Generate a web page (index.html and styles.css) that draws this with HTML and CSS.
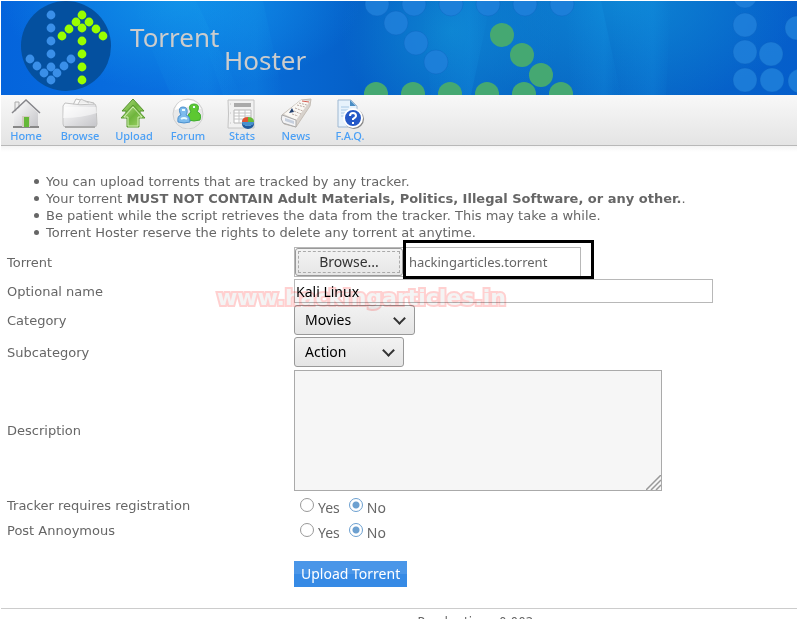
FILE: index.html
```html
<!DOCTYPE html>
<html lang="en">
<head>
    <meta charset="UTF-8">
    <meta name="viewport" content="width=device-width, initial-scale=1.0">
    <title>Torrent Hoster - Upload</title>
    <link rel="stylesheet" href="styles.css">
</head>
<body>
    <header class="banner">
        <svg class="dots" width="797" height="94" viewBox="0 0 797 94" aria-hidden="true">
            <defs>
                <linearGradient id="ray" x1="0" y1="0" x2="1" y2="0">
                    <stop offset="0" stop-color="#18a0ec" stop-opacity="0"/>
                    <stop offset=".7" stop-color="#18a0ec" stop-opacity=".2"/>
                    <stop offset="1" stop-color="#18a0ec" stop-opacity="0"/>
                </linearGradient>
            </defs>
            <g fill="url(#ray)">
                <path d="M130 0h65l45 94h-70z"/>
                <path d="M190 0h72l20 94h-60z"/>
                <path d="M420 0h70l-20 94h-40z"/>
                <path d="M565 0h35l20 94h-50z"/>
                <path d="M610 0h60l-5 94h-50z"/>
            </g>
            <g fill="#2080da" fill-opacity=".85" stroke="#0a5cb8" stroke-opacity=".3">
                <circle cx="376" cy="3" r="12"/><circle cx="413" cy="3" r="12"/><circle cx="450" cy="3" r="12"/>
                <circle cx="487" cy="3" r="12"/><circle cx="524" cy="3" r="12"/><circle cx="561" cy="3" r="12"/>
                <circle cx="395" cy="22" r="12"/><circle cx="415" cy="42" r="12"/><circle cx="435" cy="61" r="12"/>
                <circle cx="744" cy="-5" r="12"/><circle cx="744" cy="24" r="12"/><circle cx="744" cy="51" r="12"/>
                <circle cx="744" cy="79" r="12"/><circle cx="770" cy="53" r="12"/><circle cx="771" cy="79" r="12"/>
                <circle cx="796" cy="27" r="12"/><circle cx="799" cy="80" r="12"/>
            </g>
            <g fill="#45a872">
                <circle cx="375" cy="93" r="12"/><circle cx="412" cy="93" r="12"/><circle cx="449" cy="93" r="12"/>
                <circle cx="486" cy="93" r="12"/><circle cx="523" cy="93" r="12"/><circle cx="560" cy="93" r="12"/>
                <circle cx="501" cy="34" r="12"/><circle cx="521" cy="54" r="12"/><circle cx="540" cy="74" r="12"/>
            </g>
        </svg>
        <a href="#" class="brand" aria-label="Torrent Hoster">
            <svg class="logo" width="90" height="90" viewBox="0 0 90 90" aria-hidden="true">
                <circle cx="45" cy="45" r="45" fill="#04509f"/>
                <g fill="#3a8fe8">
                    <circle cx="30" cy="14" r="4.400"/><circle cx="30" cy="27" r="4.400"/><circle cx="30" cy="40" r="4.400"/>
                    <circle cx="30" cy="53" r="4.400"/><circle cx="30" cy="66" r="4.400"/><circle cx="30" cy="79" r="4.400"/>
                    <circle cx="9" cy="58" r="4.400"/><circle cx="16" cy="65" r="4.400"/><circle cx="23" cy="72" r="4.400"/>
                    <circle cx="36" cy="72" r="4.400"/><circle cx="43" cy="65" r="4.400"/><circle cx="50" cy="58" r="4.400"/>
                </g>
                <g fill="#9f0">
                    <circle cx="61" cy="14" r="4.400"/><circle cx="61" cy="27" r="4.400"/><circle cx="61" cy="40" r="4.400"/>
                    <circle cx="61" cy="53" r="4.400"/><circle cx="61" cy="66" r="4.400"/><circle cx="61" cy="79" r="4.400"/>
                    <circle cx="41" cy="35" r="4.400"/><circle cx="48" cy="28" r="4.400"/><circle cx="55" cy="21" r="4.400"/>
                    <circle cx="68" cy="21" r="4.400"/><circle cx="75" cy="28" r="4.400"/><circle cx="82" cy="35" r="4.400"/>
                </g>
            </svg>
            <span class="brand-name">Torrent <span class="second">Hoster</span></span>
        </a>
    </header>

    <nav class="menu">
        <a href="#">
            <svg width="40" height="34" viewBox="0 0 40 34">
                <defs>
                    <linearGradient id="grey" x1="0" y1="0" x2="1" y2="1"><stop offset="0" stop-color="#fff"/><stop offset="1" stop-color="#c4c4c8"/></linearGradient>
                    <linearGradient id="green" x1="0" y1="0" x2="1" y2="1"><stop offset="0" stop-color="#b9e08a"/><stop offset=".5" stop-color="#6fb53c"/><stop offset="1" stop-color="#a5d86f"/></linearGradient>
                </defs>
                <path d="M9 7h4v9H9z" fill="#eee" stroke="#aaa"/>
                <path d="M8 18L20 6l12 12v14H8z" fill="url(#grey)"/>
                <path d="M7 31h26v2H7z" fill="#888"/>
                <path d="M16 21h8v11h-8z" fill="#d2ccc0"/>
                <path d="M18 22h5v10h-5z" fill="#65b838"/>
                <path d="M6 18L20 5l14 13" fill="none" stroke="#85858a" stroke-width="1.500"/>
            </svg>
            Home
        </a>
        <a href="#">
            <svg width="40" height="34" viewBox="0 0 40 34">
                <path d="M13 10l3-6 18 4-2 5z" fill="#fafafa" stroke="#bbb"/>
                <path d="M18 9l3-5 8 4" fill="#eee" stroke="#c4c4c4"/>
                <path d="M5 8q15 3 30 1l1 2 1 18q0 3-3 3H6q-3 0-3-3L3 11z" fill="url(#grey)" stroke="#c2c2c2"/>
                <path d="M4 12h32l1 6q-15 5-34 5z" fill="#fff" fill-opacity=".55"/>
                <path d="M5 32h30" stroke="#aaa" stroke-width="2"/>
            </svg>
            Browse
        </a>
        <a href="#">
            <svg width="40" height="34" viewBox="0 0 40 34">
                <path d="M19 4l11 12h-4v7H12v-7H8z" fill="url(#green)" stroke="#55922e"/>
                <path d="M19 10l12 13h-6v9H13v-9H7z" fill="url(#green)" stroke="#5c9935"/>
                <path d="M19 12l9 10h-4v9h-10v-9h-4z" fill="none" stroke="#d2efb6"/>
            </svg>
            Upload
        </a>
        <a href="#">
            <svg width="40" height="34" viewBox="0 0 40 34">
                <circle cx="20" cy="19" r="15" fill="#e9e9e9" stroke="#d0d0d0"/>
                <path d="M7 14q3-10 14-9 9 1 12 9-13-5-26 1z" fill="#fff"/>
                <path d="M22 15q-2-6 4-6 6 0 4 6l-1 2q5 1 3 8-6 2-12 0-1-6 3-8z" fill="#5dc832" stroke="#3fae2c"/>
                <path d="M12 18q-2-6 3-6 5 0 4 6l-1 2q4 1 4 7-6 2-12 0-1-6 3-7z" fill="#7dbbed" stroke="#4a8fcd"/>
                <path d="M14 15h3M13 24q3-2 6 0M25 12h2" stroke="#e7faff" stroke-width="2"/>
            </svg>
            Forum
        </a>
        <a href="#">
            <svg width="40" height="34" viewBox="0 0 40 34">
                <path d="M6 5h26v28H6q1-14 0-28z" fill="#f1f1f1" stroke="#c4c4c4"/>
                <path d="M12 8h17v4H12z" fill="#aaa"/>
                <path d="M12 15h17v13H12z" fill="#fff" stroke="#b5b5b5"/>
                <path d="M12 18h17M12 21h17M12 24h17M17 15v13M23 15v13M8 9h1M8 18h1M8 28h1" stroke="#c4c4c4"/>
                <path d="M20 26a6 5 0 0 0 12 0v3a6 5 0 0 1-12 0z" fill="#205b9d"/>
                <ellipse cx="26" cy="27" rx="6" ry="4" fill="#4791cf"/>
                <path d="M26 27h-6q0-5 6-5z" fill="#e05532"/>
                <path d="M26 27v-5q6 0 6 5z" fill="#68b935"/>
            </svg>
            Stats
        </a>
        <a href="#">
            <svg width="40" height="34" viewBox="0 0 40 34">
                <path d="M6 20L25 5l10-1-1 7-14 21-12-3z" fill="#d8d2cc" stroke="#c4bdb5"/>
                <path d="M8 19L25 5l9 1-14 19z" fill="#faf8f4"/>
                <path d="M23 8l8 2M21 10l8 2M19 13l8 3M18 16l7 3M16 19l6 2" stroke="#b9a9a2" stroke-dasharray="2 1"/>
                <path d="M26 6l7 1" stroke="#d45b50"/>
                <path d="M16 13l2 4-5 1z" fill="#23406e"/>
                <path d="M6 20l14 5v7L7 28q-3-4-1-8z" fill="#f3f3f5" stroke="#aaa"/>
                <path d="M9 23l9 3v3l-9-3z" fill="#c6cfdd"/>
            </svg>
            News
        </a>
        <a href="#">
            <svg width="40" height="34" viewBox="0 0 40 34">
                <path d="M8 5h13l6 6v21H8z" fill="#e7f2fc" stroke="#9fb8d1"/>
                <path d="M20 5v6h6z" fill="#4b8ec5"/>
                <path d="M11 12h8M11 15h10M11 18h8M11 21h6" stroke="#a8c8e5"/>
                <circle cx="24" cy="24" r="10" fill="#888"/>
                <circle cx="23" cy="23" r="9" fill="#2458c7" stroke="#fff" stroke-width="2"/>
                <path d="M20 21q0-3 3-3t3 3q0 1-3 3v1M23 27v2" fill="none" stroke="#fff" stroke-width="2"/>
            </svg>
            F.A.Q.
        </a>
    </nav>

    <main class="content">
        <ul class="rules">
            <li>You can upload torrents that are tracked by any tracker.</li>
            <li>Your torrent <b>MUST NOT CONTAIN Adult Materials, Politics, Illegal Software, or any other.</b>.</li>
            <li>Be patient while the script retrieves the data from the tracker. This may take a while.</li>
            <li>Torrent Hoster reserve the rights to delete any torrent at anytime.</li>
        </ul>

        <form class="upload-form">
            <label for="torrent">Torrent</label>
            <div class="file-row">
                <div class="file-box">
                    <button type="button" class="browse"><span>Browse...</span></button>
                    <input type="text" id="torrent" value="hackingarticles.torrent" readonly>
                </div>
                <div class="marker"></div>
            </div>

            <label for="name">Optional name</label>
            <div class="name-row">
                <input type="text" id="name" class="name-input" value="Kali Linux">
                <div class="watermark">www.hackingarticles.in</div>
            </div>

            <label for="category">Category</label>
            <div class="select-row">
                <select id="category" class="category">
                    <option>Movies</option>
                </select>
            </div>

            <label for="subcategory">Subcategory</label>
            <div class="select-row">
                <select id="subcategory" class="subcategory">
                    <option>Action</option>
                </select>
            </div>

            <label for="description">Description</label>
            <div class="text-row">
                <textarea id="description"></textarea>
                <svg class="grip" width="15" height="15" viewBox="0 0 15 15" aria-hidden="true">
                    <path d="M0 15L15 0M5 15L15 5M10 15l5-5" stroke="#999" stroke-width="1.500"/>
                </svg>
            </div>

            <span id="registration">Tracker requires registration</span>
            <div class="radios" role="radiogroup" aria-labelledby="registration">
                <input type="radio" name="reg" id="regYes"><label for="regYes">Yes</label>
                <input type="radio" name="reg" id="regNo" checked><label for="regNo">No</label>
            </div>

            <span id="anonymous">Post Annoymous</span>
            <div class="radios" role="radiogroup" aria-labelledby="anonymous">
                <input type="radio" name="anon" id="anonYes"><label for="anonYes">Yes</label>
                <input type="radio" name="anon" id="anonNo" checked><label for="anonNo">No</label>
            </div>

            <button type="submit" class="submit">Upload Torrent</button>
        </form>
    </main>

    <footer class="footer">Render time: 0.002</footer>
</body>
</html>
```
FILE: styles.css
```css
* {
    box-sizing: border-box;
}
html {
    overflow: hidden;
}
body {
    margin: 0;
    padding: 1px 0 0 1px;
    background: #fff;
    color: #666;
    font-family: "DejaVu Sans", Verdana, sans-serif;
    font-size: 13px;
    line-height: 17px;
}
.banner {
    position: relative;
    height: 94px;
    overflow: hidden;
    background:
        radial-gradient(ellipse 180px 90px at 180px 0, #1090e8, transparent),
        radial-gradient(ellipse 110px 100px at 450px 30px, #0d82d0, transparent),
        radial-gradient(ellipse 180px 110px at 620px 0, #0d84d4, transparent),
        linear-gradient(90deg, #0464dc, #0a72e0 25%, #0560c8 45%, #0868c4 70%, #055ecb);
}
.dots {
    position: absolute;
    top: 0;
    left: 0;
}
.brand {
    position: relative;
    display: flex;
    gap: 19px;
    padding-left: 20px;
    text-decoration: none;
}
.logo {
    flex: none;
}
.brand-name {
    display: flex;
    flex-direction: column;
    padding-top: 25px;
    color: #ccc;
    font: 26px/23px "Noto Sans", sans-serif;
}
.second {
    padding-left: 94px;
}
.menu {
    display: flex;
    height: 51px;
    padding-left: 4px;
    gap: 12px;
    border-bottom: 1px solid #b8b8b8;
    background: linear-gradient(#f8f8f8, #e4e4e4);
}
.menu a {
    display: flex;
    flex-direction: column;
    align-items: center;
    width: 42px;
    color: #4a9ff5;
    font: 500 11px/14px "Noto Sans", sans-serif;
    text-decoration: none;
}
.content {
    padding: 4px 6px 21px;
    background: linear-gradient(#f4f4f4, #fff 6px);
}
.rules {
    margin: 23px 0 6px;
    padding-left: 27px;
    list-style: none;
}
.rules li::before {
    content: "";
    display: inline-block;
    width: 5px;
    height: 5px;
    margin-right: 7px;
    border-radius: 50%;
    background: #666;
    vertical-align: 2px;
}
.upload-form {
    display: grid;
    grid-template-columns: 287px 1fr;
    row-gap: 2px;
    align-items: center;
}
input, select, textarea, button {
    margin: 0;
    font: 14px/20px "Noto Sans", sans-serif;
}
.file-row, .name-row, .text-row {
    position: relative;
}
.file-box {
    display: flex;
    width: 287px;
    height: 30px;
    border: 1px solid #b8b8b8;
}
.file-box input {
    flex: 1;
    min-width: 0;
    padding: 0 6px;
    border: 0;
    background: #fff;
    color: #666;
    font-size: 13px;
}
.browse {
    width: 108px;
    padding: 2px;
    border: 1px solid #999;
    border-radius: 3px;
    background: linear-gradient(#f3f3f3, #e6e6e6);
    color: #333;
}
.browse span {
    display: block;
    border: 1px dashed #aaa;
}
.marker {
    position: absolute;
    top: -7px;
    left: 109px;
    width: 191px;
    height: 39px;
    border: 3px solid #000;
}
.name-input {
    display: block;
    width: 419px;
    height: 24px;
    padding: 0 1px;
    border: 1px solid #b8b8b8;
    background: #fff;
    color: #000;
}
.watermark {
    position: absolute;
    z-index: 1;
    top: 5px;
    left: -77px;
    color: #f4f4f4;
    font: bold 22px/28px "DejaVu Sans", sans-serif;
    -webkit-text-stroke: 4px #ffd0d0;
    stroke-linejoin: round;
    paint-order: stroke fill;
    mix-blend-mode: multiply;
    pointer-events: none;
}
select {
    display: block;
    height: 30px;
    padding: 0 10px;
    border: 1px solid #999;
    border-radius: 3px;
    appearance: none;
    color: #000;
    background: linear-gradient(#f2f2f2, #e5e5e5);
}
.select-row {
    display: grid;
    justify-content: start;
    align-items: center;
}
.select-row > * {
    grid-area: 1 / 1;
}
.select-row::after {
    content: "";
    grid-area: 1 / 1;
    justify-self: end;
    width: 7px;
    height: 7px;
    margin: 0 11px 4px 0;
    border: solid #333;
    border-width: 0 2px 2px 0;
    transform: rotate(45deg);
    pointer-events: none;
}
.category {
    width: 121px;
}
.subcategory {
    width: 110px;
}
textarea {
    display: block;
    width: 368px;
    height: 121px;
    border: 1px solid #aaa;
    background: #f6f6f6;
    resize: none;
}
.text-row {
    width: 368px;
    margin: 1px 0;
}
.grip {
    position: absolute;
    right: 1px;
    bottom: 1px;
}
.radios {
    display: flex;
    align-items: center;
    height: 23px;
    padding-left: 6px;
    font: 14px/20px "Noto Sans", sans-serif;
}
.radios input {
    appearance: none;
    width: 14px;
    height: 14px;
    margin-bottom: 2px;
    border: 1px solid #999;
    border-radius: 50%;
    background: #fff;
}
.radios input:checked {
    border-color: #6ca0d0;
    background: radial-gradient(circle, #6ca0d0 3px, #fff 4px);
}
.radios label {
    padding-top: 4px;
    margin: 0 9px 0 4px;
}
.submit {
    grid-column: 2;
    justify-self: start;
    height: 26px;
    margin-top: 17px;
    padding: 0 7px;
    border: 0;
    background: linear-gradient(#4a96e8 50%, #368ae5 50%);
    color: #fff;
}
.footer {
    padding: 5px 0 0 153px;
    border-top: 1px solid #ccc;
    font-size: 12px;
    text-align: center;
}
```
